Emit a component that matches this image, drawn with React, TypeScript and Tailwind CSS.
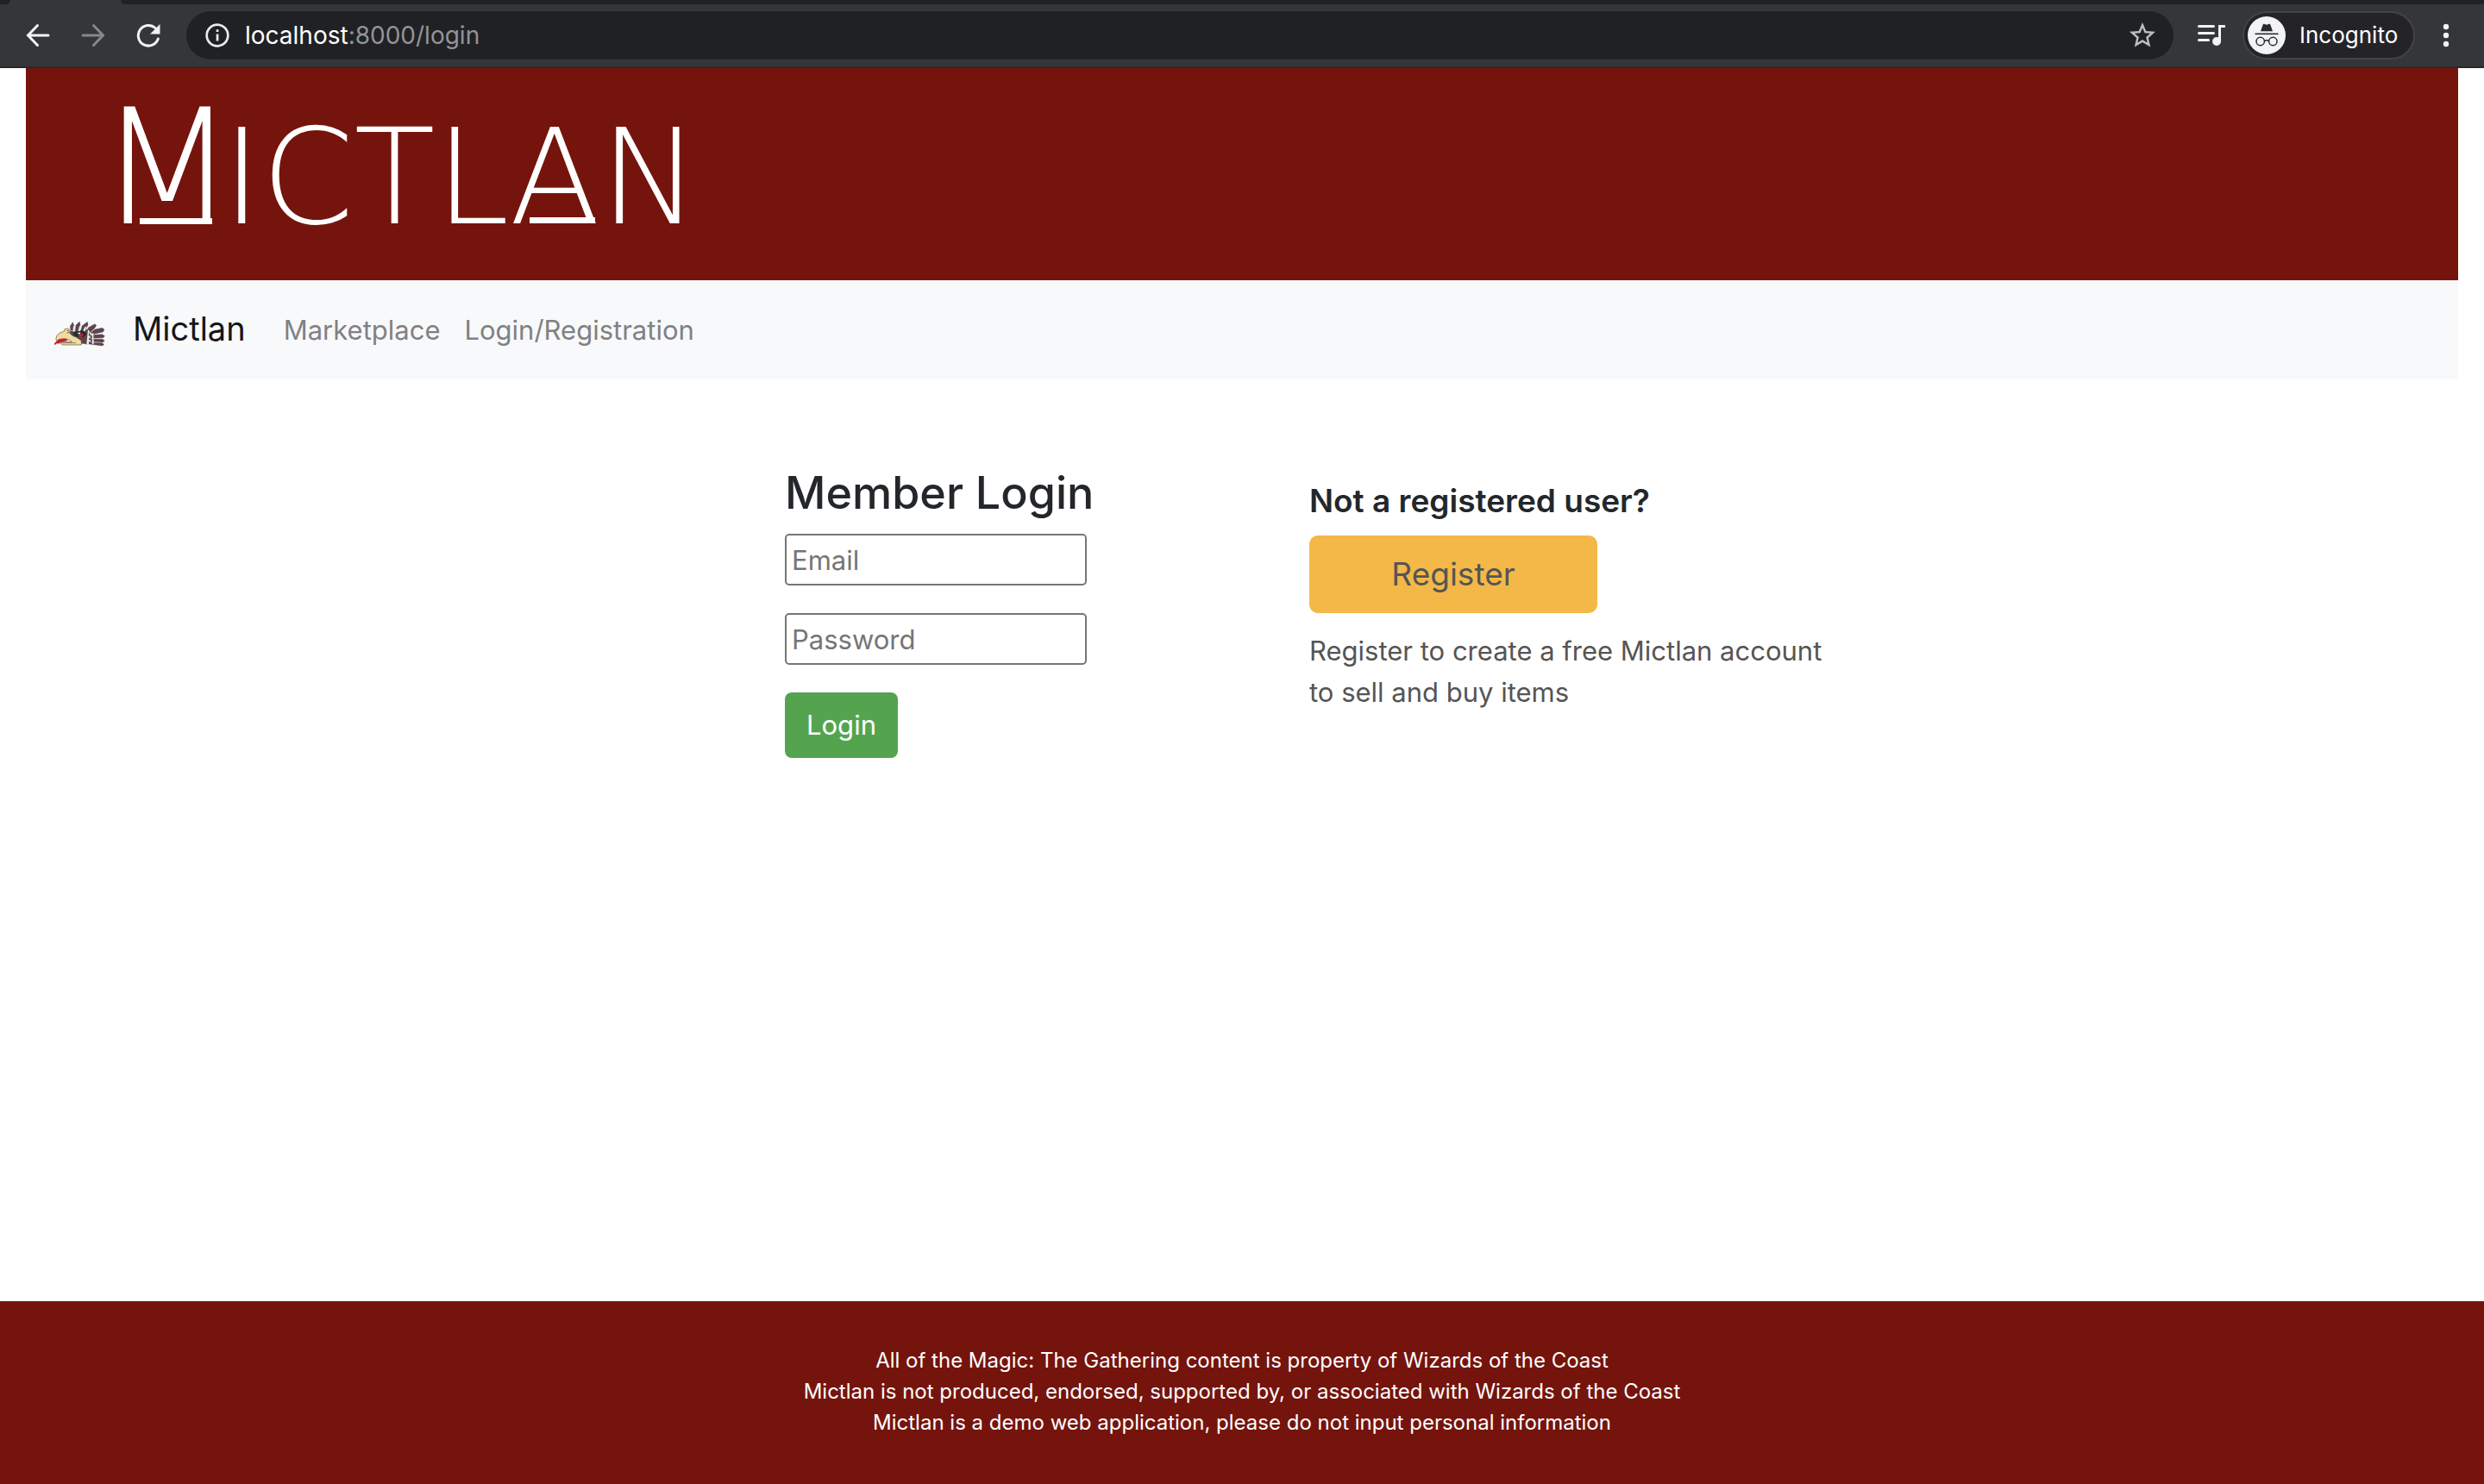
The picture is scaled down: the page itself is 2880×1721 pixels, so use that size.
import React from "react";

function BackIcon() {
  return (
    <svg className="h-7 w-7" viewBox="0 0 28 28" fill="none" stroke="#f1f3f4" strokeWidth="3" strokeLinecap="round">
      <path d="M26 14H3M13.500 2.500L2.500 14l11 11.500" />
    </svg>
  );
}

function ForwardIcon() {
  return (
    <svg className="h-7 w-7" viewBox="0 0 28 28" fill="none" stroke="#86878a" strokeWidth="3" strokeLinecap="round">
      <path d="M2 14h23M14.500 2.500L25.500 14l-11 11.500" />
    </svg>
  );
}

function ReloadIcon() {
  return (
    <svg className="h-7 w-7" viewBox="0 0 28 28" fill="none">
      <path d="M22 5.500A11.800 11.800 0 1 0 25.300 18" stroke="#f1f3f4" strokeWidth="3" strokeLinecap="round" />
      <path d="M27.500 1v11.500h-11.500z" fill="#f1f3f4" />
    </svg>
  );
}

function InfoIcon() {
  return (
    <svg className="h-7 w-7" viewBox="0 0 28 28" fill="none">
      <circle cx="14" cy="14" r="12.300" stroke="#e8eaed" strokeWidth="2.700" />
      <path d="M12.700 12.500h2.700v8h-2.700zM12.700 7.300h2.700v2.700h-2.700z" fill="#e8eaed" />
    </svg>
  );
}

function StarIcon() {
  return (
    <svg className="h-9 w-9" viewBox="0 0 24 24" fill="#bfc0c2">
      <path d="M22 9.240l-7.190-.62L12 2 9.190 8.630 2 9.240l5.460 4.730L5.820 21 12 17.270 18.180 21l-1.630-7.030L22 9.240zM12 15.400l-3.760 2.270 1-4.280-3.320-2.880 4.380-.38L12 6.100l1.710 4.040 4.380.38-3.320 2.880 1 4.280L12 15.400z" />
    </svg>
  );
}

function QueueIcon() {
  return (
    <svg className="h-6 w-8" viewBox="0 0 32 24" fill="none" stroke="#f1f3f4">
      <path d="M1.500 1.500h17M1.500 9.500h17M1.500 17.500h11" strokeWidth="3" strokeLinecap="round" />
      <path d="M25.500 19V1.500H31" strokeWidth="3" strokeLinecap="round" />
      <circle cx="22" cy="19" r="4.900" fill="#f1f3f4" stroke="none" />
    </svg>
  );
}

function IncognitoIcon() {
  return (
    <svg className="h-11 w-11" viewBox="0 0 44 44" fill="none">
      <circle cx="22" cy="22" r="22" fill="#f1f3f4" />
      <path d="M15 17.300l2.500-7.300c.3-1 1.200-1.400 2.100-1.100l2.400.8 2.400-.8c.9-.3 1.800.1 2.100 1.100l2.500 7.300z" fill="#292a2d" />
      <path d="M8.500 20.300h27" stroke="#292a2d" strokeWidth="1.600" />
      <circle cx="14.700" cy="29" r="4.700" stroke="#292a2d" strokeWidth="1.500" />
      <circle cx="29.300" cy="29" r="4.700" stroke="#292a2d" strokeWidth="1.500" />
      <path d="M19.400 28.500q2.600-1.400 5.200 0" stroke="#292a2d" strokeWidth="1.500" />
    </svg>
  );
}

function DotsIcon() {
  return (
    <svg className="h-7 w-2" viewBox="0 0 8 28" fill="#f1f3f4">
      <circle cx="4" cy="4" r="3.200" />
      <circle cx="4" cy="14" r="3.200" />
      <circle cx="4" cy="24" r="3.200" />
    </svg>
  );
}

function SerpentHead() {
  return (
    <svg className="mt-3 h-8 w-[60px]" viewBox="38 38 180 92" strokeLinejoin="round">
      <g fill="#5f454d" stroke="#3c2d33" strokeWidth="1">
        <path d="M98 72l-2-14 9-14 5 14 2 18z" />
        <path d="M114 72l2-18 13-12 2 13-6 22z" />
        <path d="M132 76l6-20 18-13 2 10-13 26z" />
        <path d="M150 80l10-18 22-12 5 5-6 10-20 18z" />
        <path d="M168 80l14-11 26-5 7 6-5 8-36 8z" />
        <path d="M168 91l12-3 28-2 8 6-5 6-42 2z" />
        <path d="M168 103h40l8 5-6 6-42-3z" />
        <path d="M168 115l38 1 8 5-6 5-40-5z" />
        <path d="M96 76l58-6 14 20v30h-16l-24-4-34-20z" />
      </g>
      <g fill="#ece9ea">
        <path d="M107 58l7-2-2 22-7-2zM128 58l7-4-4 22-8 2zM146 62l8-5-8 24-7-2z" />
        <path d="M158 70l6 6-4 14 6 2v8h-5v6h6v6h-6v8h-8z" />
        <path d="M172 84l5-3 1 40-5-1z" />
      </g>
      <path d="M108 78l32-5 11 5 1 10-10 8-26-2-8-6z" fill="#1d3034" />
      <path d="M120 82l12-3-2 8z" fill="#e8e6e2" />
      <path d="M124 92q2-8 16-9l2 7-9 6z" fill="#c5232b" />
      <path
        d="M47 106q-2-20 20-28l9-3q-2-9 8-9 13 1 13 10l-4 4q8 12 24 16l18 12v15H70l-7-4 1-6 38-1q-8-10-24-10-18 0-26 8z"
        fill="#f0dc9f"
        stroke="#2b2418"
        strokeWidth="1.500"
      />
      <path d="M85 73q7-1 7 4t-7 4" fill="none" stroke="#2b2418" strokeWidth="2" />
      <path d="M42 124l-1-6 13-14q14-5 27-3l8 6-14 4q-14 2-18 8l-7-1z" fill="#c5232b" />
      <path d="M66 116h50" stroke="#2b2418" strokeWidth="1.500" />
    </svg>
  );
}

function BrowserBar() {
  return (
    <div className="bg-[#35363a] text-[28px]">
      <div className="flex h-[5px] justify-between">
        <div className="w-3 rounded-br-lg bg-[#202124]" />
        <div className="ml-32 flex-1 rounded-bl-lg bg-[#202124]" />
      </div>
      <div className="flex h-[74px] items-center border-b-2 border-[#28292c] pr-10">
        <div className="flex items-center gap-9 pl-[30px]">
          <button aria-label="Back"><BackIcon /></button>
          <button aria-label="Forward"><ForwardIcon /></button>
          <button aria-label="Reload"><ReloadIcon /></button>
        </div>
        <div className="ml-[30px] flex h-14 flex-1 items-center rounded-full bg-[#202124] pl-[22px] pr-[18px]">
          <InfoIcon />
          <p className="ml-[18px] flex-1 text-[#939496]">
            <span className="text-white">localhost</span>:8000/login
          </p>
          <button aria-label="Bookmark this page"><StarIcon /></button>
        </div>
        <button aria-label="Media queue" className="ml-7"><QueueIcon /></button>
        <button className="ml-5 flex h-14 w-[200px] items-center gap-4 rounded-full border-2 border-[#434448] bg-[#242428] pl-1 text-[26px] text-white">
          <IncognitoIcon />
          Incognito
        </button>
        <button aria-label="Menu" className="ml-8"><DotsIcon /></button>
      </div>
    </div>
  );
}

function Wordmark() {
  return (
    <h1 className="font-['DejaVu_Sans'] text-[154px] font-extralight leading-none text-white">
      <span className="relative -mr-4 inline-block text-[185px] before:absolute before:bottom-7 before:left-12 before:h-[7px] before:w-[84px] before:bg-white">M</span>
      ictl
      <span className="relative inline-block before:absolute before:bottom-6 before:left-6 before:h-[7px] before:w-[76px] before:bg-white">a</span>
      n
    </h1>
  );
}

export default function App() {
  return (
    <div className="flex min-h-screen flex-col bg-white font-[Inter,sans-serif] text-[31px] leading-[48px] text-[#23272b]">
      <BrowserBar />
      <header className="mx-[30px] h-[246px] bg-[#75140d] px-[84px] pt-6 uppercase">
        <Wordmark />
      </header>
      <nav className="mx-[30px] flex h-[115px] items-center bg-[#f8f9fb] px-8 text-[#808183]">
        <a href="#" className="flex items-center gap-8 pb-1 text-[38px] text-[#161718]">
          <SerpentHead />
          Mictlan
        </a>
        <a href="#" className="ml-11">Marketplace</a>
        <a href="#" className="ml-7">Login/Registration</a>
      </nav>
      <main className="mx-auto grid w-full max-w-[1372px] flex-1 grid-cols-2 content-start pl-[156px] pt-[97px]">
        <form onSubmit={(e) => e.preventDefault()}>
          <h2 className="mb-3 text-[52px] font-medium leading-[70px]">Member Login</h2>
          <input aria-label="Email" type="email" placeholder="Email" className="block h-[60px] w-[350px] rounded-[5px] border-2 border-[#767676] px-1.5 placeholder:text-[#757575]" />
          <input aria-label="Password" type="password" placeholder="Password" className="mt-8 block h-[60px] w-[350px] rounded-[5px] border-2 border-[#767676] px-1.5 placeholder:text-[#757575]" />
          <button className="mt-8 block h-[76px] rounded-lg bg-[#54a44f] px-[25px] text-white">Login</button>
        </form>
        <section>
          <h3 className="pt-5 text-[37px] font-semibold">Not a registered user?</h3>
          <button className="mt-4 block h-[90px] w-[334px] rounded-[10px] bg-[#f4b848] text-[37px] text-[#555]">Register</button>
          <p className="mt-5 text-[#555]">
            Register to create a free Mictlan account to sell and buy items
          </p>
        </section>
      </main>
      <footer className="bg-[#75140d] pb-[53px] pt-[51px] text-center text-[24px] leading-9 text-white">
        <p>All of the Magic: The Gathering content is property of Wizards of the Coast</p>
        <p>Mictlan is not produced, endorsed, supported by, or associated with Wizards of the Coast</p>
        <p>Mictlan is a demo web application, please do not input personal information</p>
      </footer>
    </div>
  );
}
